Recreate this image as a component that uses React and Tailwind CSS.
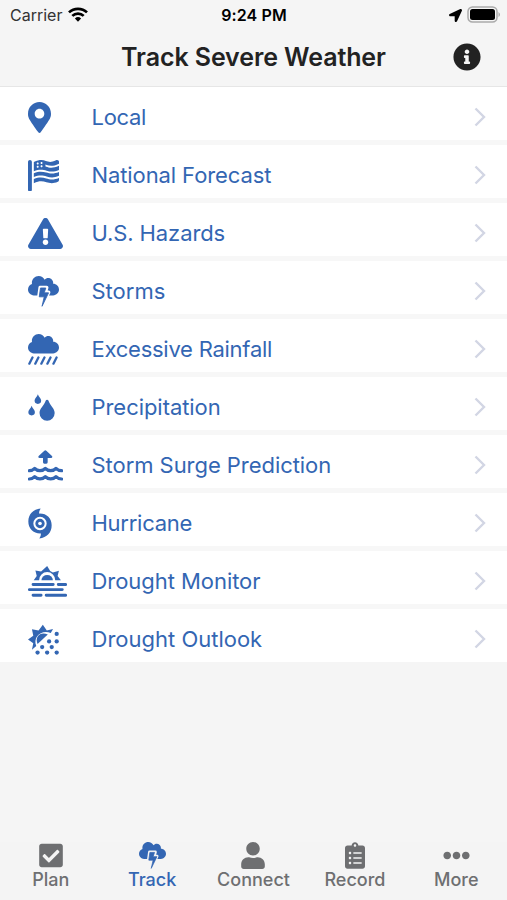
import {
  FaCheckSquare,
  FaClipboardList,
  FaEllipsisH,
  FaExclamationTriangle,
  FaFlagUsa,
  FaInfoCircle,
  FaLocationArrow,
  FaMapMarkerAlt,
  FaUser,
} from "react-icons/fa";

const CLOUD =
  "M416 128c-.6 0-1.1.2-1.6.2 1.1-5.2 1.6-10.6 1.6-16.2 0-44.2-35.8-80-80-80-24.6 0-46.3 11.3-61 28.8C256.4 24.8 219.3 0 176 0 114.2 0 64 50.1 64 112c0 7.3.8 14.3 2.1 21.2C27.8 145.8 0 181.5 0 224c0 53 43 96 96 96h320c53 0 96-43 96-96s-43-96-96-96z";

const Storm = ({ className, gap = "#ffffff" }) => (
  <svg viewBox="0 0 512 512" fill="currentColor" className={className}>
    <path d={CLOUD} />
    <path
      d="M200 190h110l-22 78h54L232 506l30-154h-84z"
      stroke={gap}
      strokeWidth="56"
      strokeLinejoin="round"
      fill={gap}
    />
    <path
      d="M206 198h88l-26 80h72L232 500l36-156h-82z"
      stroke="currentColor"
      strokeWidth="14"
      strokeLinejoin="round"
    />
  </svg>
);

const Rainfall = ({ className }) => (
  <svg viewBox="0 0 512 512" fill="currentColor" className={className}>
    <path d={CLOUD} />
    <path
      d="M74 388L22 490M172 388l-52 102M272 388l-52 102M372 388l-52 102M472 388l-52 102"
      stroke="currentColor"
      strokeWidth="38"
      strokeLinecap="round"
    />
  </svg>
);

const Raindrops = ({ className }) => (
  <svg viewBox="0 0 82 82" fill="currentColor" className={className}>
    <path d="M30 1c2 8 10 12 10 19a10 10 0 0 1-20 0c0-7 8-11 10-19z" />
    <path d="M11 36c2 8 10 12 10 19a10 10 0 0 1-20 0c0-7 8-11 10-19z" />
    <path d="M54 20c1-3 7-3 8 0 5 16 19 23 19 38a23 23 0 0 1-46 0c0-15 14-22 19-38z" />
  </svg>
);

const Surge = ({ className }) => (
  <svg viewBox="0 0 105 93" fill="currentColor" className={className}>
    <path d="M49 2q3-3 6 0l17 16q3 6-3 6H59v13q0 4-4 4h-6q-4 0-4-4V24H35q-6 0-3-6z" />
    <path
      d="M4 62c8 0 12-3 16-7 8 9 24 9 32 0 8 9 24 9 32 0 4 4 9 7 17 7M4 87c8 0 12-3 16-7 8 9 24 9 32 0 8 9 24 9 32 0 4 4 9 7 17 7"
      fill="none"
      stroke="currentColor"
      strokeWidth="9.500"
      strokeLinecap="round"
      strokeLinejoin="round"
    />
  </svg>
);

const Hurricane = ({ className }) => (
  <svg viewBox="0 0 72 92" fill="currentColor" className={className}>
    <path d="M38 1Q33 8 33 16C56 15 71 30 71 51C71 73 57 88 34 91Q39 84 39 76C16 77 1 61 1 40C1 18 16 3 38 1Z" />
    <circle cx="36" cy="46" r="17" fill="none" stroke="#fff" strokeWidth="6" />
    <circle cx="36" cy="46" r="5.500" fill="#fff" />
  </svg>
);

const SunHaze = ({ className }) => (
  <svg viewBox="0 0 116 92" fill="currentColor" className={className}>
    <path d="M17 42l9-12-4-17 17 3L57 0l9 15 8 4 18-5-4 16 10 12H81a24 24 0 0 0-48 0z" />
    <path d="M40 42a17 15 0 0 1 34 0z" />
    <path
      d="M15 55h60M90 55h22M4 70h98M15 87h24M54 87h58"
      stroke="currentColor"
      strokeWidth="8.500"
      strokeLinecap="round"
    />
  </svg>
);

const SunDust = ({ className }) => (
  <svg viewBox="0 0 94 92" fill="currentColor" className={className}>
    <path d="M12 77l4-20L0 46l16-11-4-20 20 4L45 1l12 18 19-5-7 12C40 15 14 38 25 66z" />
    <path d="M29 60C19 36 39 21 60 31z" />
    <g>
      <circle cx="87" cy="29" r="6.500" />
      <circle cx="64" cy="52" r="6.500" />
      <circle cx="87" cy="52" r="6.500" />
      <circle cx="43" cy="69" r="6.500" />
      <circle cx="72" cy="69" r="6.500" />
      <circle cx="29" cy="85.500" r="6.500" />
      <circle cx="58" cy="85.500" r="6.500" />
      <circle cx="87" cy="85.500" r="6.500" />
    </g>
  </svg>
);

const rows = [
  { label: "Local", Icon: FaMapMarkerAlt, size: "w-[23px] h-[31px]", tracking: "tracking-[-0.3px]" },
  { label: "National Forecast", Icon: FaFlagUsa, size: "w-[31px] h-[31px]", tracking: "tracking-[-0.1px]" },
  { label: "U.S. Hazards", Icon: FaExclamationTriangle, size: "w-[35px] h-[31px]", tracking: "tracking-[-0.1px]" },
  { label: "Storms", Icon: Storm, size: "w-[31px] h-[31px]", tracking: "tracking-[0px]" },
  { label: "Excessive Rainfall", Icon: Rainfall, size: "w-[31px] h-[31px]", tracking: "tracking-[-0.25px]" },
  { label: "Precipitation", Icon: Raindrops, size: "w-[27px] h-[27px]", tracking: "tracking-[-0.05px]" },
  { label: "Storm Surge Prediction", Icon: Surge, size: "w-[35px] h-[31px]", tracking: "tracking-[-0.05px]" },
  { label: "Hurricane", Icon: Hurricane, size: "w-[24px] h-[31px]", tracking: "tracking-[-0.25px]" },
  { label: "Drought Monitor", Icon: SunHaze, size: "w-[39px] h-[31px]", tracking: "tracking-[-0.05px]" },
  { label: "Drought Outlook", Icon: SunDust, size: "w-[31px] h-[31px]", tracking: "tracking-[0px]" },
];

const tabs = [
  { label: "Plan", Icon: FaCheckSquare, size: "w-[24px] h-[27px]" },
  { label: "Track", Icon: Storm, size: "w-[27px] h-[27px]", active: true },
  { label: "Connect", Icon: FaUser, size: "w-[24px] h-[27px]" },
  { label: "Record", Icon: FaClipboardList, size: "w-[20px] h-[27px]" },
  { label: "More", Icon: FaEllipsisH, size: "w-[27px] h-[27px]" },
];

const StatusBar = () => (
  <div className="grid grid-cols-3 items-center h-[30px] pl-[10px] pr-[7px] text-black">
    <div className="flex items-center gap-[6px] text-[16px] text-[#333]">
      Carrier
      <svg viewBox="0 0 20 15" className="w-[20px] h-[15px] mb-[2px]" fill="none" stroke="#000" strokeWidth="2.7">
        <path d="M1 5.4a13 13 0 0 1 18 0" />
        <path d="M4.3 8.9a8.2 8.2 0 0 1 11.4 0" />
        <path d="M10 14.8L6.9 11.5a4.6 4.6 0 0 1 6.2 0z" fill="#000" stroke="none" />
      </svg>
    </div>
    <div className="pr-[2px] text-center text-[16px] font-semibold tracking-[0.1px]">9:24 PM</div>
    <div className="flex items-center justify-end gap-[5px] pb-[2px]">
      <FaLocationArrow className="w-[13px] h-[13px] mt-[2px]" />
      <svg viewBox="0 0 33 17" className="w-[33px] h-[17px]">
        <rect x="1" y="1" width="29" height="15" rx="4.5" fill="none" stroke="#aaa" strokeWidth="1.5" />
        <rect x="3" y="3" width="25" height="11" rx="2.5" fill="#000" />
        <path d="M31.5 6v5q1.5-1 1.5-2.5T31.5 6z" fill="#aaa" />
      </svg>
    </div>
  </div>
);

export default function App() {
  return (
    <div className="flex flex-col w-[507px] h-[900px] overflow-hidden bg-[#f5f5f5] font-['Inter',sans-serif]">
      <StatusBar />

      {/* HEADER */}
      <header className="grid grid-cols-[60px_1fr_60px] items-center h-[57px] pb-[3px] border-b border-[#e6e6e6]">
        <span />
        <h1 className="pt-[3px] text-center text-[25px] font-semibold tracking-[-0.1px] text-[#222]">
          Track Severe Weather
        </h1>
        <FaInfoCircle className="w-[28px] h-[28px] ml-[6px] text-[#222]" />
      </header>

      {/* LIST */}
      <ul className="flex flex-col gap-[5px] bg-[#f7f7f7]">
        {rows.map(({ label, Icon, size, tracking }) => (
          <li key={label} className="flex items-center h-[53px] pt-[7px] pl-[28px] pr-[21px] bg-white text-[#3366b3]">
            <span className="flex w-[63.5px]">
              <Icon className={size} preserveAspectRatio="none" />
            </span>
            <span className={`flex-1 text-[22px] leading-[28px] ${tracking}`}>{label}</span>
            <svg viewBox="0 0 12 20" className="w-[12px] h-[20px]" fill="none" stroke="#d2d6e4" strokeWidth="2.4">
              <path d="M1.5 1.5L10 10l-8.500 8.500" />
            </svg>
          </li>
        ))}
      </ul>

      {/* TAB BAR */}
      <nav className="grid grid-cols-5 mt-auto h-[58px] bg-[#f4f4f4]">
        {tabs.map(({ label, Icon, size, active }) => (
          <div
            key={label}
            className={`flex flex-col items-center ${active ? "text-[#3366b3]" : "text-[#6e6f71]"}`}
          >
            <Icon className={size} {...(active ? { gap: "#f4f4f4" } : {})} />
            <span className="-mt-px text-[18px] leading-[24px] font-medium">{label}</span>
          </div>
        ))}
      </nav>
    </div>
  );
}
